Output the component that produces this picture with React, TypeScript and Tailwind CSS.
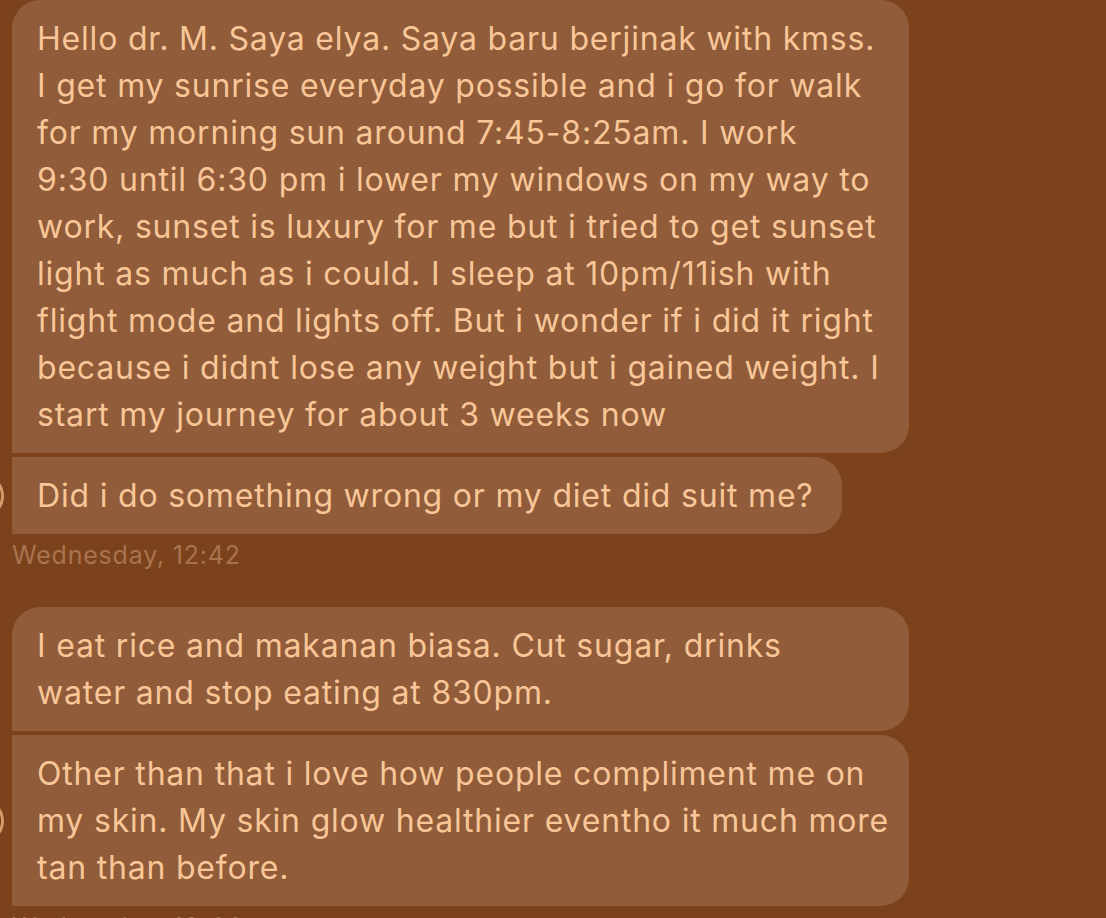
import React from "react";

interface IBubble {
  lines: string[];
  first: boolean;
  full: boolean;
}

interface IGroup {
  bubbles: IBubble[];
  time: string;
}

const groups: IGroup[] = [
  {
    bubbles: [
      {
        first: true,
        full: true,
        lines: [
          "Hello dr. M. Saya elya. Saya baru berjinak with kmss.",
          "I get my sunrise everyday possible and i go for walk",
          "for my morning sun around 7:45-8:25am. I work",
          "9:30 until 6:30 pm i lower my windows on my way to",
          "work, sunset is luxury for me but i tried to get sunset",
          "light as much as i could. I sleep at 10pm/11ish with",
          "flight mode and lights off. But i wonder if i did it right",
          "because i didnt lose any weight but i gained weight. I",
          "start my journey for about 3 weeks now",
        ],
      },
      { first: false, full: false, lines: ["Did i do something wrong or my diet did suit me?"] },
    ],
    time: "Wednesday, 12:42",
  },
  {
    bubbles: [
      {
        first: true,
        full: true,
        lines: ["I eat rice and makanan biasa. Cut sugar, drinks", "water and stop eating at 830pm."],
      },
      {
        first: false,
        full: true,
        lines: [
          "Other than that i love how people compliment me on",
          "my skin. My skin glow healthier eventho it much more",
          "tan than before.",
        ],
      },
    ],
    time: "Wednesday, 12:44",
  },
];

const Bubble = ({ bubble, last }: { bubble: IBubble; last: boolean }) => {
  return (
    <div className="flex items-end">
      <div className="w-[12px] shrink-0 self-stretch relative">
        {last && (
          <div className="absolute left-[-40px] top-1/2 -translate-y-1/2 w-[44px] h-[44px] rounded-full bg-[#6e3a17] border-[3px] border-[#d79a68]" />
        )}
      </div>
      <div
        className={
          "bg-[#905c3a] rounded-r-[28px] pl-[25px] pr-[28px] py-[15px] " +
          (bubble.first ? "rounded-tl-[28px] " : "") +
          (bubble.full ? "w-[897px]" : "")
        }
      >
        {bubble.lines.map((line) => (
          <div key={line} className="whitespace-nowrap leading-[47px]">
            {line}
          </div>
        ))}
      </div>
    </div>
  );
};

const App = () => {
  return (
    <div
      className="w-[1106px] h-[918px] overflow-hidden bg-[#7b421b] text-[#f9c698] text-[32px] tracking-[0.8px]"
      style={{ fontFamily: "Inter, 'Noto Sans', sans-serif" }}
    >
      <div className="flex flex-col">
        {groups.map((group, gi) => (
          <div key={group.time} className={gi === 0 ? "" : "mt-[35px]"}>
            <div className="flex flex-col gap-[4px]">
              {group.bubbles.map((b, i) => (
                <Bubble key={i} bubble={b} last={i === group.bubbles.length - 1} />
              ))}
            </div>
            <div className="pl-[12px] pt-[4px] text-[25px] tracking-[0.8px] leading-[34px] text-[#aa7350]">
              {group.time}
            </div>
          </div>
        ))}
      </div>
    </div>
  );
};

export default App;
